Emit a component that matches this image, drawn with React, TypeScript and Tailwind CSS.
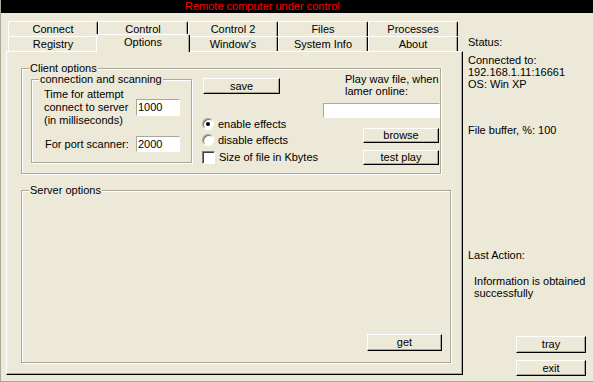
const tabsBack = ['Connect', 'Control', 'Control 2', 'Files', 'Processes'];
const tabsFront = ['Registry', 'Options', "Window's", 'System Info', 'About'];

function Tab({ label, active }: { label: string; active?: boolean }) {
  if (active) {
    return (
      <div className="relative z-10 -mx-[2px] -mb-[1px] flex h-[18px] w-[94px] justify-center rounded-t-[2px] border-l border-r border-t border-l-white border-r-black border-t-white bg-[#ECE9D8] pt-[1px] shadow-[inset_-1px_0_0_#aca899]">
        {label}
      </div>
    );
  }
  return (
    <div className="flex h-[15px] w-[90px] items-center justify-center rounded-t-[2px] border-l border-r border-t border-l-white border-r-black border-t-white shadow-[inset_-1px_0_0_#aca899]">
      {label}
    </div>
  );
}

function Btn({ children, className = '' }: { children: React.ReactNode; className?: string }) {
  return (
    <div
      className={`flex items-center justify-center border border-b-black border-l-white border-r-black border-t-white bg-[#ECE9D8] shadow-[inset_-1px_-1px_0_#aca899] ${className}`}
    >
      {children}
    </div>
  );
}

function Field({ value = '', className = '' }: { value?: string; className?: string }) {
  return (
    <div
      className={`flex items-center border border-b-white border-l-[#aca899] border-r-white border-t-[#aca899] bg-white pl-[1px] ${className}`}
    >
      {value}
    </div>
  );
}

function Group({
  label,
  className = '',
  children,
}: {
  label: string;
  className?: string;
  children?: React.ReactNode;
}) {
  return (
    <div className={`relative border border-[#aca899] shadow-[1px_1px_0_#fff,inset_1px_1px_0_#fff] ${className}`}>
      <span className="absolute -top-[7px] left-[7px] bg-[#ECE9D8] px-[1px] leading-[12px] whitespace-nowrap">
        {label}
      </span>
      {children}
    </div>
  );
}

function Radio({ label, checked }: { label: string; checked?: boolean }) {
  return (
    <div className="flex h-[16px] items-center gap-[4px]">
      <div className="flex h-[12px] w-[12px] items-center justify-center rounded-full border border-b-white border-l-[#aca899] border-r-white border-t-[#aca899] bg-white shadow-[inset_1px_1px_0_#716f64]">
        {checked && <div className="h-[4px] w-[4px] rounded-full bg-black" />}
      </div>
      <span>{label}</span>
    </div>
  );
}

export default function App() {
  return (
    <div className="flex h-[382px] w-[593px] flex-col overflow-hidden border-b border-l border-[#aca899] bg-[#ECE9D8] font-['Liberation_Sans',Arial,sans-serif] text-[11px] leading-[13px] text-black">
      <div className="h-[13px] shrink-0 bg-black pl-[184px] text-[#ff0000] whitespace-nowrap">
        Remote computer under control
      </div>

      <div className="flex flex-1">
        {/* tabs + page */}
        <div className="w-[462px] shrink-0 pl-[5px] pt-[8px]">
          <div className="ml-[2px] flex h-[15px]">
            {tabsBack.map((t) => (
              <Tab key={t} label={t} />
            ))}
          </div>
          <div className="ml-[2px] flex h-[15px] items-end">
            {tabsFront.map((t) => (
              <Tab key={t} label={t} active={t === 'Options'} />
            ))}
          </div>

          <div className="h-[324px] w-[457px] border border-b-black border-l-white border-r-black border-t-white shadow-[inset_-1px_-1px_0_#aca899]">
            <Group label="Client options" className="ml-[14px] mt-[16px] flex h-[106px] w-[420px]">
              <Group label="connection and scanning" className="ml-[9px] mt-[10px] h-[84px] w-[161px] shrink-0">
                <div className="mt-[8px] flex items-center pl-[12px]">
                  <div className="w-[92px] whitespace-nowrap">
                    <div>Time for attempt</div>
                    <div>connect to server</div>
                    <div>(in milliseconds)</div>
                  </div>
                  <Field value="1000" className="h-[17px] w-[44px]" />
                </div>
                <div className="mt-[9px] flex h-[16px] items-center pl-[12px]">
                  <div className="w-[92px] pl-[1px] whitespace-nowrap">For port scanner:</div>
                  <Field value="2000" className="h-[16px] w-[44px]" />
                </div>
              </Group>

              <div className="ml-[10px] flex shrink-0 flex-col">
                <Btn className="ml-[1px] mt-[9px] h-[16px] w-[77px]">save</Btn>
                <div className="mt-[22px]">
                  <Radio label="enable effects" checked />
                  <Radio label="disable effects" />
                  <div className="mt-[1px] flex h-[16px] items-center gap-[4px]">
                    <div className="h-[13px] w-[13px] border border-b-white border-l-[#808080] border-r-white border-t-[#808080] bg-white shadow-[inset_1px_1px_0_#404040]" />
                    <span className="whitespace-nowrap">Size of file in Kbytes</span>
                  </div>
                </div>
              </div>

              <div className="flex flex-1 flex-col items-end">
                <div className="mt-[4px] w-[95px] leading-[12px] whitespace-nowrap">
                  <div>Play wav file, when</div>
                  <div>lamer online:</div>
                </div>
                <Field className="mt-[6px] h-[15px] w-[117px]" />
                <Btn className="mr-[1px] mt-[10px] h-[15px] w-[76px]">browse</Btn>
                <Btn className="mr-[1px] mt-[7px] h-[15px] w-[76px]">test play</Btn>
              </div>
            </Group>

            <Group
              label="Server options"
              className="ml-[14px] mt-[16px] flex h-[173px] w-[430px] flex-col items-end justify-end pb-[11px] pr-[8px]"
            >
              <Btn className="h-[17px] w-[75px]">get</Btn>
            </Group>
          </div>
        </div>

        {/* status side panel */}
        <div className="flex flex-1 flex-col pl-[5px] pt-[23px] whitespace-nowrap">
          <div>Status:</div>
          <div className="mt-[5px] leading-[12px]">
            <div>Connected to:</div>
            <div>192.168.1.11:16661</div>
            <div>OS: Win XP</div>
          </div>
          <div className="mt-[34px]">File buffer, %: 100</div>
          <div className="mt-[112px]">Last Action:</div>
          <div className="ml-[6px] mt-[13px] leading-[12px]">
            <div>Information is obtained</div>
            <div>successfully</div>
          </div>
          <Btn className="ml-[48px] mt-[37px] h-[17px] w-[70px]">tray</Btn>
          <Btn className="ml-[48px] mt-[7px] h-[16px] w-[70px]">exit</Btn>
        </div>
      </div>
    </div>
  );
}
